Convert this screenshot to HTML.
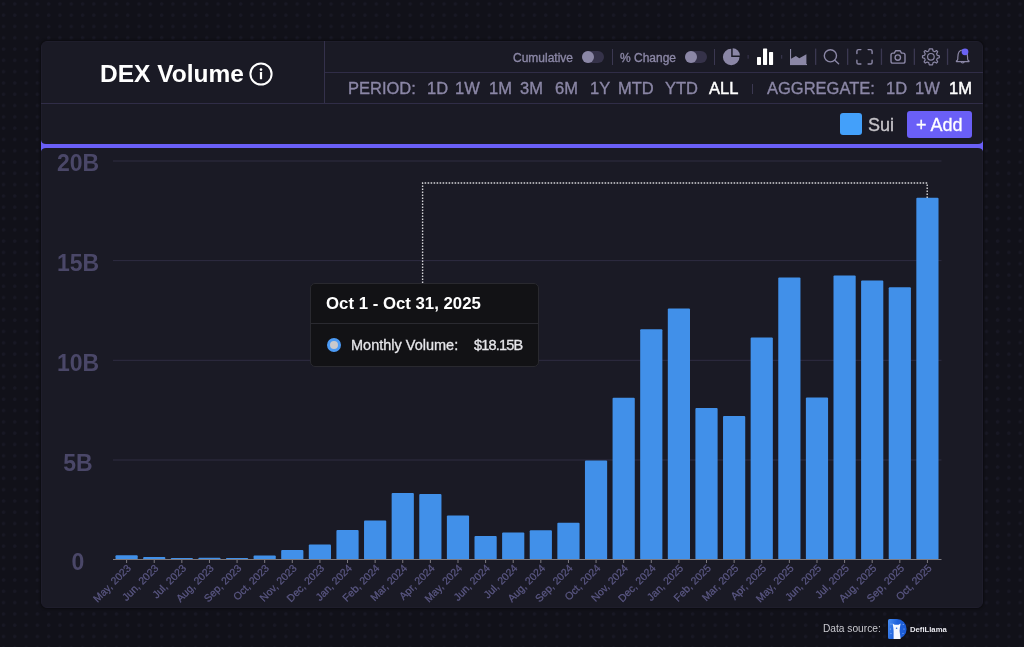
<!DOCTYPE html>
<html><head><meta charset="utf-8">
<style>
*{margin:0;padding:0;box-sizing:border-box}
html,body{width:1024px;height:647px;overflow:hidden}
body>*{will-change:transform}
body{position:relative;font-family:"Liberation Sans",sans-serif;background-color:#111119;
background-image:radial-gradient(circle at 3.5px 3.9px,#181824 1.2px,transparent 2.2px);
background-size:11.31px 11.31px;}
.a{position:absolute}
.card{left:41px;top:41px;width:942px;height:567px;background:#1a1a25;border:1px solid #1e1d2b;border-radius:6px;box-shadow:0 0 2px 0.5px #0c0c11}
.t{position:absolute;white-space:nowrap;line-height:1}
.hl{position:absolute;height:1px;background:#302d47}
.vl{position:absolute;width:1.2px;background:#34314b}
.lab{color:#8b87a6;-webkit-text-stroke:0.35px #8b87a6}
.ylab{position:absolute;width:60px;left:47.5px;text-align:center;font-weight:bold;font-size:23px;color:#4a4768;line-height:1}
.sep{position:absolute;width:1px;height:16px;top:48.5px;background:#3b3851}
svg text{font-family:"Liberation Sans",sans-serif}
</style></head><body>
<div class="a card"></div>

<!-- header -->
<div class="t" style="left:99.5px;top:61.5px;font-size:24.5px;font-weight:bold;color:#fff">DEX Volume</div>
<svg class="a" style="left:248px;top:61px" width="26" height="26" viewBox="0 0 26 26"><circle cx="13" cy="13" r="10.6" fill="none" stroke="#fff" stroke-width="2"/><circle cx="13" cy="8.6" r="1.3" fill="#fff"/><rect x="11.9" y="11" width="2.2" height="7.2" rx="0.5" fill="#fff"/></svg>

<div class="vl" style="left:324px;top:41px;height:63px"></div>
<div class="hl" style="left:325px;top:72px;width:658px"></div>
<div class="hl" style="left:41px;top:103px;width:942px"></div>

<!-- toolbar row 1 -->
<div class="t lab" style="left:513px;top:51.7px;font-size:12px">Cumulative</div>
<div class="a" style="left:582px;top:51px;width:22px;height:12px;border-radius:6px;background:#353249"></div>
<div class="a" style="left:582px;top:51px;width:12px;height:12px;border-radius:50%;background:#8b87a6"></div>
<div class="sep" style="left:612px"></div>
<div class="t lab" style="left:619.5px;top:51.7px;font-size:12px">% Change</div>
<div class="a" style="left:684.5px;top:51px;width:22px;height:12px;border-radius:6px;background:#353249"></div>
<div class="a" style="left:684.5px;top:51px;width:12px;height:12px;border-radius:50%;background:#8b87a6"></div>
<div class="sep" style="left:714px"></div>


<!-- icons -->
<svg class="a" style="left:0;top:0" width="1024" height="120" viewBox="0 0 1024 120">
 <g fill="#8b87a6">
  <path d="M731.2 57 L731.2 48.7 A8.3 8.3 0 1 0 739.5 57 Z"/>
  <path d="M732.7 55.5 L732.7 48.3 A7.2 7.2 0 0 1 739.9 55.5 Z"/>
 </g>
 <rect x="747.6" y="55" width="1" height="3.7" fill="#3b3851"/>
 <g fill="#ffffff">
  <rect x="757" y="56.9" width="4" height="8" rx="0.6"/>
  <rect x="763" y="48.6" width="4.1" height="16.3" rx="0.6"/>
  <rect x="769" y="52.1" width="4.1" height="12.8" rx="0.6"/>
 </g>
 <rect x="781.2" y="55" width="1" height="3.7" fill="#3b3851"/>
 <g fill="#8b87a6">
  <rect x="790" y="49" width="1.1" height="16"/>
  <rect x="790" y="64" width="17" height="1.1"/>
  <path d="M791 64.5 L791 58.7 L795.9 55.9 L799.3 58.2 L806.4 54.2 L806.4 64.5 Z"/>
 </g>
 <g fill="none" stroke="#8b87a6" stroke-width="1.4" stroke-linecap="round" stroke-linejoin="round">
  <circle cx="830.4" cy="55.8" r="6.1"/>
  <path d="M834.8 60.3 L838.6 63.8"/>
  <path d="M856.9 53.6 V51.2 Q856.9 49.6 858.5 49.6 H860.9 M868.1 49.6 H870.5 Q872.1 49.6 872.1 51.2 V53.6 M872.1 60.2 V62.4 Q872.1 64 870.5 64 H868.1 M860.9 64 H858.5 Q856.9 64 856.9 62.4 V60.2"/>
  <path d="M891 55 Q891 53.1 892.9 53.1 H894.3 L895.6 50.8 H900.2 L901.5 53.1 H903.1 Q905 53.1 905 55 V61.2 Q905 63.1 903.1 63.1 H892.9 Q891 63.1 891 61.2 Z"/>
  <circle cx="897.8" cy="57.6" r="2.7"/>
 </g>
 <g fill="none" stroke="#8b87a6" stroke-width="1.2" stroke-linecap="round" stroke-linejoin="round">
  <circle cx="930.9" cy="56.8" r="3.3"/>
  <path d="M930.9 48.8 L932.5 48.8 L933.1 51 L934.6 51.7 L936.5 50.5 L937.7 51.7 L936.6 53.7 L937.2 55.2 L939.3 55.9 L939.3 57.7 L937.2 58.4 L936.6 59.9 L937.7 61.9 L936.5 63.1 L934.6 62 L933.1 62.6 L932.5 64.8 L929.3 64.8 L928.7 62.6 L927.2 62 L925.3 63.1 L924.1 61.9 L925.2 59.9 L924.6 58.4 L922.5 57.7 L922.5 55.9 L924.6 55.2 L925.2 53.7 L924.1 51.7 L925.3 50.5 L927.2 51.7 L928.7 51 L929.3 48.8 Z"/>
  <path d="M957.8 57.5 Q957.8 50 962.7 50 Q967.6 50 967.6 57.5 L967.6 59 Q967.6 60.2 969 61 L969 61.6 L956.4 61.6 L956.4 61 Q957.8 60.2 957.8 59 Z"/>
  <path d="M961.2 62 Q962.7 64 964.2 62"/>
 </g>
 <circle cx="965" cy="51.8" r="3.4" fill="#6b63f5"/>
 <g fill="#3b3851">
  <rect x="815" y="48.6" width="1.3" height="16.3"/>
  <rect x="847" y="48.6" width="1.3" height="16.3"/>
  <rect x="880.8" y="48.6" width="1.3" height="16.3"/>
  <rect x="913.7" y="48.6" width="1.3" height="16.3"/>
  <rect x="946.9" y="48.6" width="1.3" height="16.3"/>
 </g>
</svg>

<!-- row 2 -->
<div class="t lab" style="left:347.5px;top:80px;font-size:16.5px">PERIOD:</div>
<div class="t lab" style="left:426.5px;top:80px;font-size:16.5px">1D</div>
<div class="t lab" style="left:455px;top:80px;font-size:16.5px">1W</div>
<div class="t lab" style="left:489px;top:80px;font-size:16.5px">1M</div>
<div class="t lab" style="left:520px;top:80px;font-size:16.5px">3M</div>
<div class="t lab" style="left:555px;top:80px;font-size:16.5px">6M</div>
<div class="t lab" style="left:590px;top:80px;font-size:16.5px">1Y</div>
<div class="t lab" style="left:617.5px;top:80px;font-size:16.5px">MTD</div>
<div class="t lab" style="left:665px;top:80px;font-size:16.5px">YTD</div>
<div class="t" style="left:709px;top:80px;font-size:16.5px;color:#fff;-webkit-text-stroke:0.45px #fff">ALL</div>
<div class="a" style="left:752px;top:83.5px;width:1px;height:10px;background:#3b3851"></div>
<div class="t lab" style="left:767px;top:80px;font-size:16.5px">AGGREGATE:</div>
<div class="t lab" style="left:886px;top:80px;font-size:16.5px">1D</div>
<div class="t lab" style="left:914.5px;top:80px;font-size:16.5px">1W</div>
<div class="t" style="left:948.5px;top:80px;font-size:16.5px;color:#fff;-webkit-text-stroke:0.45px #fff">1M</div>

<!-- legend row -->
<div class="a" style="left:840px;top:112.7px;width:22.2px;height:22.2px;border-radius:3px;background:#43a0fa"></div>
<div class="t" style="left:868px;top:116px;font-size:18px;color:#c6c4c9;-webkit-text-stroke:0.35px #c6c4c9">Sui</div>
<div class="a" style="left:906.5px;top:111px;width:64.5px;height:26.5px;border-radius:3px;background:#6a5ff7"></div>
<div class="t" style="left:915.5px;top:116px;font-size:18px;color:#fff;-webkit-text-stroke:0.3px #fff">+ Add</div>

<!-- purple brush line -->
<svg class="a" style="left:0;top:130px" width="1024" height="30" viewBox="0 130 1024 30"><path d="M41 140 Q41.5 144 46 144 H978 Q982.5 144 983 140 V151.5 Q982.5 148 978 148 H46 Q41.5 148 41 151.5 Z" fill="#6a5ff7"/></svg>

<!-- y labels -->
<div class="ylab" style="top:152px">20B</div>
<div class="ylab" style="top:252px">15B</div>
<div class="ylab" style="top:352px">10B</div>
<div class="ylab" style="top:452px">5B</div>
<div class="ylab" style="top:550.5px">0</div>

<svg class="a" style="left:0;top:0" width="1024" height="647" viewBox="0 0 1024 647">
<rect x="113" y="160.5" width="828.5" height="1" fill="#2e2c42"/>
<rect x="113" y="260.1" width="828.5" height="1" fill="#2e2c42"/>
<rect x="113" y="359.8" width="828.5" height="1" fill="#2e2c42"/>
<rect x="113" y="459.5" width="828.5" height="1" fill="#2e2c42"/>
<rect x="115.50" y="555.20" width="22.2" height="4.30" rx="1" fill="#4190e9"/>
<rect x="143.12" y="556.90" width="22.2" height="2.60" rx="1" fill="#4190e9"/>
<rect x="170.73" y="558.00" width="22.2" height="1.50" rx="1" fill="#4190e9"/>
<rect x="198.34" y="557.80" width="22.2" height="1.70" rx="1" fill="#4190e9"/>
<rect x="225.96" y="558.00" width="22.2" height="1.50" rx="1" fill="#4190e9"/>
<rect x="253.57" y="555.50" width="22.2" height="4.00" rx="1" fill="#4190e9"/>
<rect x="281.19" y="550.00" width="22.2" height="9.50" rx="1" fill="#4190e9"/>
<rect x="308.80" y="544.40" width="22.2" height="15.10" rx="1" fill="#4190e9"/>
<rect x="336.42" y="530.10" width="22.2" height="29.40" rx="1" fill="#4190e9"/>
<rect x="364.03" y="520.50" width="22.2" height="39.00" rx="1" fill="#4190e9"/>
<rect x="391.65" y="493.10" width="22.2" height="66.40" rx="1" fill="#4190e9"/>
<rect x="419.26" y="494.10" width="22.2" height="65.40" rx="1" fill="#4190e9"/>
<rect x="446.88" y="515.50" width="22.2" height="44.00" rx="1" fill="#4190e9"/>
<rect x="474.50" y="536.00" width="22.2" height="23.50" rx="1" fill="#4190e9"/>
<rect x="502.11" y="532.50" width="22.2" height="27.00" rx="1" fill="#4190e9"/>
<rect x="529.72" y="530.20" width="22.2" height="29.30" rx="1" fill="#4190e9"/>
<rect x="557.34" y="522.80" width="22.2" height="36.70" rx="1" fill="#4190e9"/>
<rect x="584.95" y="460.60" width="22.2" height="98.90" rx="1" fill="#4190e9"/>
<rect x="612.57" y="397.80" width="22.2" height="161.70" rx="1" fill="#4190e9"/>
<rect x="640.18" y="329.20" width="22.2" height="230.30" rx="1" fill="#4190e9"/>
<rect x="667.80" y="308.50" width="22.2" height="251.00" rx="1" fill="#4190e9"/>
<rect x="695.41" y="408.00" width="22.2" height="151.50" rx="1" fill="#4190e9"/>
<rect x="723.03" y="416.10" width="22.2" height="143.40" rx="1" fill="#4190e9"/>
<rect x="750.64" y="337.50" width="22.2" height="222.00" rx="1" fill="#4190e9"/>
<rect x="778.26" y="277.60" width="22.2" height="281.90" rx="1" fill="#4190e9"/>
<rect x="805.88" y="397.40" width="22.2" height="162.10" rx="1" fill="#4190e9"/>
<rect x="833.49" y="275.40" width="22.2" height="284.10" rx="1" fill="#4190e9"/>
<rect x="861.10" y="280.60" width="22.2" height="278.90" rx="1" fill="#4190e9"/>
<rect x="888.72" y="287.20" width="22.2" height="272.30" rx="1" fill="#4190e9"/>
<rect x="916.33" y="197.80" width="22.2" height="361.70" rx="1" fill="#4190e9"/>
<rect x="113" y="559.0" width="828.5" height="1" fill="#7d7a80"/>
<rect x="126.10" y="560.0" width="1" height="3" fill="#7d7a80"/>
<rect x="153.72" y="560.0" width="1" height="3" fill="#7d7a80"/>
<rect x="181.33" y="560.0" width="1" height="3" fill="#7d7a80"/>
<rect x="208.94" y="560.0" width="1" height="3" fill="#7d7a80"/>
<rect x="236.56" y="560.0" width="1" height="3" fill="#7d7a80"/>
<rect x="264.17" y="560.0" width="1" height="3" fill="#7d7a80"/>
<rect x="291.79" y="560.0" width="1" height="3" fill="#7d7a80"/>
<rect x="319.40" y="560.0" width="1" height="3" fill="#7d7a80"/>
<rect x="347.02" y="560.0" width="1" height="3" fill="#7d7a80"/>
<rect x="374.63" y="560.0" width="1" height="3" fill="#7d7a80"/>
<rect x="402.25" y="560.0" width="1" height="3" fill="#7d7a80"/>
<rect x="429.87" y="560.0" width="1" height="3" fill="#7d7a80"/>
<rect x="457.48" y="560.0" width="1" height="3" fill="#7d7a80"/>
<rect x="485.10" y="560.0" width="1" height="3" fill="#7d7a80"/>
<rect x="512.71" y="560.0" width="1" height="3" fill="#7d7a80"/>
<rect x="540.32" y="560.0" width="1" height="3" fill="#7d7a80"/>
<rect x="567.94" y="560.0" width="1" height="3" fill="#7d7a80"/>
<rect x="595.55" y="560.0" width="1" height="3" fill="#7d7a80"/>
<rect x="623.17" y="560.0" width="1" height="3" fill="#7d7a80"/>
<rect x="650.78" y="560.0" width="1" height="3" fill="#7d7a80"/>
<rect x="678.40" y="560.0" width="1" height="3" fill="#7d7a80"/>
<rect x="706.01" y="560.0" width="1" height="3" fill="#7d7a80"/>
<rect x="733.63" y="560.0" width="1" height="3" fill="#7d7a80"/>
<rect x="761.25" y="560.0" width="1" height="3" fill="#7d7a80"/>
<rect x="788.86" y="560.0" width="1" height="3" fill="#7d7a80"/>
<rect x="816.48" y="560.0" width="1" height="3" fill="#7d7a80"/>
<rect x="844.09" y="560.0" width="1" height="3" fill="#7d7a80"/>
<rect x="871.70" y="560.0" width="1" height="3" fill="#7d7a80"/>
<rect x="899.32" y="560.0" width="1" height="3" fill="#7d7a80"/>
<rect x="926.93" y="560.0" width="1" height="3" fill="#7d7a80"/>
<text x="128.80" y="566.0" transform="rotate(-45 128.80 566.0)" text-anchor="end" dominant-baseline="central" font-size="10.5" fill="#5a5783" stroke="#5a5783" stroke-width="0.25">May, 2023</text>
<text x="156.41" y="566.0" transform="rotate(-45 156.41 566.0)" text-anchor="end" dominant-baseline="central" font-size="10.5" fill="#5a5783" stroke="#5a5783" stroke-width="0.25">Jun, 2023</text>
<text x="184.03" y="566.0" transform="rotate(-45 184.03 566.0)" text-anchor="end" dominant-baseline="central" font-size="10.5" fill="#5a5783" stroke="#5a5783" stroke-width="0.25">Jul, 2023</text>
<text x="211.64" y="566.0" transform="rotate(-45 211.64 566.0)" text-anchor="end" dominant-baseline="central" font-size="10.5" fill="#5a5783" stroke="#5a5783" stroke-width="0.25">Aug, 2023</text>
<text x="239.26" y="566.0" transform="rotate(-45 239.26 566.0)" text-anchor="end" dominant-baseline="central" font-size="10.5" fill="#5a5783" stroke="#5a5783" stroke-width="0.25">Sep, 2023</text>
<text x="266.87" y="566.0" transform="rotate(-45 266.87 566.0)" text-anchor="end" dominant-baseline="central" font-size="10.5" fill="#5a5783" stroke="#5a5783" stroke-width="0.25">Oct, 2023</text>
<text x="294.49" y="566.0" transform="rotate(-45 294.49 566.0)" text-anchor="end" dominant-baseline="central" font-size="10.5" fill="#5a5783" stroke="#5a5783" stroke-width="0.25">Nov, 2023</text>
<text x="322.10" y="566.0" transform="rotate(-45 322.10 566.0)" text-anchor="end" dominant-baseline="central" font-size="10.5" fill="#5a5783" stroke="#5a5783" stroke-width="0.25">Dec, 2023</text>
<text x="349.72" y="566.0" transform="rotate(-45 349.72 566.0)" text-anchor="end" dominant-baseline="central" font-size="10.5" fill="#5a5783" stroke="#5a5783" stroke-width="0.25">Jan, 2024</text>
<text x="377.33" y="566.0" transform="rotate(-45 377.33 566.0)" text-anchor="end" dominant-baseline="central" font-size="10.5" fill="#5a5783" stroke="#5a5783" stroke-width="0.25">Feb, 2024</text>
<text x="404.95" y="566.0" transform="rotate(-45 404.95 566.0)" text-anchor="end" dominant-baseline="central" font-size="10.5" fill="#5a5783" stroke="#5a5783" stroke-width="0.25">Mar, 2024</text>
<text x="432.56" y="566.0" transform="rotate(-45 432.56 566.0)" text-anchor="end" dominant-baseline="central" font-size="10.5" fill="#5a5783" stroke="#5a5783" stroke-width="0.25">Apr, 2024</text>
<text x="460.18" y="566.0" transform="rotate(-45 460.18 566.0)" text-anchor="end" dominant-baseline="central" font-size="10.5" fill="#5a5783" stroke="#5a5783" stroke-width="0.25">May, 2024</text>
<text x="487.80" y="566.0" transform="rotate(-45 487.80 566.0)" text-anchor="end" dominant-baseline="central" font-size="10.5" fill="#5a5783" stroke="#5a5783" stroke-width="0.25">Jun, 2024</text>
<text x="515.41" y="566.0" transform="rotate(-45 515.41 566.0)" text-anchor="end" dominant-baseline="central" font-size="10.5" fill="#5a5783" stroke="#5a5783" stroke-width="0.25">Jul, 2024</text>
<text x="543.02" y="566.0" transform="rotate(-45 543.02 566.0)" text-anchor="end" dominant-baseline="central" font-size="10.5" fill="#5a5783" stroke="#5a5783" stroke-width="0.25">Aug, 2024</text>
<text x="570.64" y="566.0" transform="rotate(-45 570.64 566.0)" text-anchor="end" dominant-baseline="central" font-size="10.5" fill="#5a5783" stroke="#5a5783" stroke-width="0.25">Sep, 2024</text>
<text x="598.25" y="566.0" transform="rotate(-45 598.25 566.0)" text-anchor="end" dominant-baseline="central" font-size="10.5" fill="#5a5783" stroke="#5a5783" stroke-width="0.25">Oct, 2024</text>
<text x="625.87" y="566.0" transform="rotate(-45 625.87 566.0)" text-anchor="end" dominant-baseline="central" font-size="10.5" fill="#5a5783" stroke="#5a5783" stroke-width="0.25">Nov, 2024</text>
<text x="653.49" y="566.0" transform="rotate(-45 653.49 566.0)" text-anchor="end" dominant-baseline="central" font-size="10.5" fill="#5a5783" stroke="#5a5783" stroke-width="0.25">Dec, 2024</text>
<text x="681.10" y="566.0" transform="rotate(-45 681.10 566.0)" text-anchor="end" dominant-baseline="central" font-size="10.5" fill="#5a5783" stroke="#5a5783" stroke-width="0.25">Jan, 2025</text>
<text x="708.72" y="566.0" transform="rotate(-45 708.72 566.0)" text-anchor="end" dominant-baseline="central" font-size="10.5" fill="#5a5783" stroke="#5a5783" stroke-width="0.25">Feb, 2025</text>
<text x="736.33" y="566.0" transform="rotate(-45 736.33 566.0)" text-anchor="end" dominant-baseline="central" font-size="10.5" fill="#5a5783" stroke="#5a5783" stroke-width="0.25">Mar, 2025</text>
<text x="763.95" y="566.0" transform="rotate(-45 763.95 566.0)" text-anchor="end" dominant-baseline="central" font-size="10.5" fill="#5a5783" stroke="#5a5783" stroke-width="0.25">Apr, 2025</text>
<text x="791.56" y="566.0" transform="rotate(-45 791.56 566.0)" text-anchor="end" dominant-baseline="central" font-size="10.5" fill="#5a5783" stroke="#5a5783" stroke-width="0.25">May, 2025</text>
<text x="819.18" y="566.0" transform="rotate(-45 819.18 566.0)" text-anchor="end" dominant-baseline="central" font-size="10.5" fill="#5a5783" stroke="#5a5783" stroke-width="0.25">Jun, 2025</text>
<text x="846.79" y="566.0" transform="rotate(-45 846.79 566.0)" text-anchor="end" dominant-baseline="central" font-size="10.5" fill="#5a5783" stroke="#5a5783" stroke-width="0.25">Jul, 2025</text>
<text x="874.40" y="566.0" transform="rotate(-45 874.40 566.0)" text-anchor="end" dominant-baseline="central" font-size="10.5" fill="#5a5783" stroke="#5a5783" stroke-width="0.25">Aug, 2025</text>
<text x="902.02" y="566.0" transform="rotate(-45 902.02 566.0)" text-anchor="end" dominant-baseline="central" font-size="10.5" fill="#5a5783" stroke="#5a5783" stroke-width="0.25">Sep, 2025</text>
<text x="929.63" y="566.0" transform="rotate(-45 929.63 566.0)" text-anchor="end" dominant-baseline="central" font-size="10.5" fill="#5a5783" stroke="#5a5783" stroke-width="0.25">Oct, 2025</text>
</svg>


<!-- dotted pointer -->
<svg class="a" style="left:0;top:0" width="1024" height="647" viewBox="0 0 1024 647">
 <path d="M422.6 283 V183 H927.2 V198" fill="none" stroke="#d4d4d8" stroke-width="1.4" stroke-dasharray="1.6 1.4"/>
</svg>
<!-- tooltip -->
<div class="a" style="left:309.5px;top:282.5px;width:229px;height:84px;background:#121215;border:1px solid #29292f;border-radius:5px"></div>
<div class="a" style="left:311px;top:322.5px;width:226.5px;height:1px;background:#2a2a30"></div>
<div class="t" style="left:326px;top:295.5px;font-size:16.8px;font-weight:bold;color:#fff">Oct 1 - Oct 31, 2025</div>
<div class="a" style="left:327.2px;top:338.2px;width:14px;height:14px;border-radius:50%;background:#c9c9cc;border:3.5px solid #4c9bf5"></div>
<div class="t" style="left:351.3px;top:337.5px;font-size:14.5px;color:#e6e6ea;-webkit-text-stroke:0.3px #e6e6ea">Monthly Volume:</div>
<div class="t" style="left:474px;top:337.5px;font-size:14.5px;color:#e6e6ea;letter-spacing:-0.8px;-webkit-text-stroke:0.3px #e6e6ea">$18.15B</div>

<!-- footer -->
<div class="t" style="left:823px;top:624px;font-size:10.2px;color:#c9c9cf">Data source:</div>
<div class="t" style="left:909.5px;top:625.8px;font-size:7.7px;font-weight:bold;color:#e8e8ee;letter-spacing:0px">DefiLlama</div>


<svg class="a" style="left:888px;top:619px" width="19" height="20" viewBox="0 0 19 20">
 <defs><linearGradient id="lg" x1="0" y1="0" x2="1" y2="0.3"><stop offset="0" stop-color="#4a90f5"/><stop offset="0.5" stop-color="#1f62dc"/><stop offset="1" stop-color="#1b5bd6"/></linearGradient></defs>
 <path d="M1.6 0 H9 A9.6 10 0 0 1 9 20 H1.6 Q0 20 0 18.4 V1.6 Q0 0 1.6 0 Z" fill="url(#lg)"/>
 <path d="M5.6 20 V12 L5.3 8.4 L4.6 4.6 L6.6 5.8 H10.6 L12.6 4.6 L11.9 8.4 L11.6 12 L12.6 20 Z" fill="#f4f7ff"/>
 <circle cx="8.6" cy="9.2" r="0.8" fill="#2b6be0"/>
 <g fill="#a9c8ff"><circle cx="3" cy="5" r="0.5"/><circle cx="2.3" cy="10" r="0.5"/><circle cx="3" cy="14.5" r="0.5"/><circle cx="15.2" cy="5.5" r="0.5"/><circle cx="16" cy="10" r="0.5"/><circle cx="15" cy="14.5" r="0.5"/></g>
</svg>

</body></html>
